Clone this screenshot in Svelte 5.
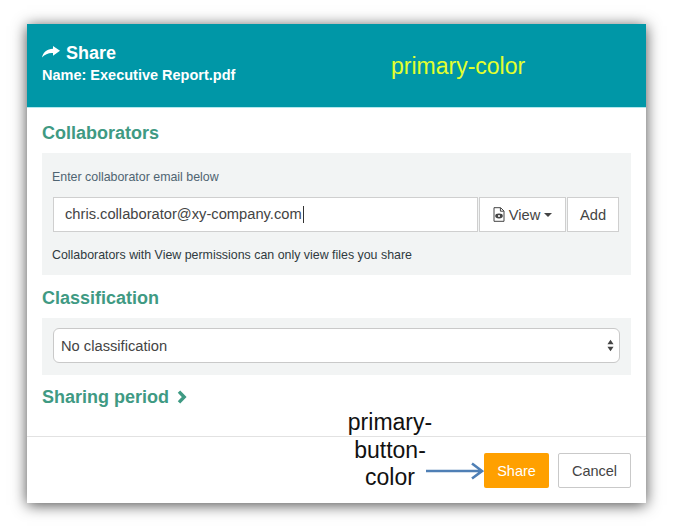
<script>
  let email = 'chris.collaborator@xy-company.com';
</script>

<div class="page">
  <div class="modal">
    <header class="modal-header">
      <h1 class="title">
        <svg class="share-icon" viewBox="0 0 18 12" width="18" height="12" aria-hidden="true">
          <path d="M11 0 L18 4.8 L11 9.8 V7 C7 6.6 3 8 0 11.6 C1 6.4 5 3.2 11 2.8 Z" fill="currentColor" />
        </svg>
        Share
      </h1>
      <div class="file-name">Name: Executive Report.pdf</div>
      <span class="note-primary">primary-color</span>
    </header>

    <div class="modal-body">
      <h2 class="section-title">Collaborators</h2>
      <div class="panel collab">
        <div class="hint">Enter collaborator email below</div>
        <div class="input-row">
          <div class="email-input">{email}<span class="caret"></span></div>
          <button class="btn view" type="button">
            <svg viewBox="0 0 12 15" width="12" height="15" aria-hidden="true">
              <path d="M1 0.7 H7.6 L11 4 V14.3 H1 Z M7.4 0.9 V4.2 H10.8" fill="none" stroke="#444" stroke-width="1" />
              <ellipse cx="6" cy="9" rx="3.8" ry="2.4" fill="#444" />
              <circle cx="6" cy="9" r="1.1" fill="#fff" />
            </svg>
            View
            <span class="caret-down"></span>
          </button>
          <button class="btn add" type="button">Add</button>
        </div>
        <div class="perm-note">Collaborators with View permissions can only view files you share</div>
      </div>

      <h2 class="section-title second">Classification</h2>
      <div class="panel classify">
        <div class="select">
          <span>No classification</span>
          <svg viewBox="0 0 8 14" width="7" height="13" aria-hidden="true">
            <path d="M4 0.5 L7.5 5.6 H0.5 Z M4 13.5 L0.5 8.4 H7.5 Z" fill="#444" />
          </svg>
        </div>
      </div>

      <h2 class="section-title third">
        Sharing period
        <svg viewBox="0 0 10 14" width="10" height="14" aria-hidden="true">
          <path d="M2 1.6 L7.2 7 L2 12.4" fill="none" stroke="currentColor" stroke-width="3.4" />
        </svg>
      </h2>
    </div>

    <footer class="modal-footer">
      <button class="btn-share" type="button">Share</button>
      <button class="btn-cancel" type="button">Cancel</button>
      <div class="note-button">
        <span>primary-</span>
        <span>button-</span>
        <span>color</span>
      </div>
      <svg class="note-arrow" viewBox="0 0 58 18" width="58" height="18" aria-hidden="true">
        <path d="M0 9 H55 M46 1.5 L56 9 L46 16.5" fill="none" stroke="#4f7fb5" stroke-width="2.6" />
      </svg>
    </footer>
  </div>
</div>

<style>
  :global(body) {
    margin: 0;
    background: #fff;
  }

  .page {
    width: 673px;
    height: 530px;
    padding: 24px 27px 27px;
    box-sizing: border-box;
    font-family: "Liberation Sans", Arial, sans-serif;
    overflow: hidden;
  }

  .modal {
    width: 619px;
    height: 479px;
    background: #fff;
    box-shadow: 0 2px 14px rgba(0, 0, 0, 0.7);
    display: flex;
    flex-direction: column;
  }

  .modal-header {
    position: relative;
    height: 84px;
    box-sizing: border-box;
    padding: 19px 15px 0;
    background: #0097a7;
    border-bottom: 1px solid #b2e8ee;
    color: #fff;
  }

  .title {
    margin: 0;
    display: flex;
    align-items: center;
    gap: 6px;
    font-size: 18px;
    line-height: 20px;
    font-weight: 700;
  }

  .share-icon {
    flex: none;
    margin-top: -3px;
  }

  .file-name {
    margin-top: 4px;
    font-size: 14.5px;
    line-height: 16px;
    font-weight: 700;
  }

  .note-primary {
    position: absolute;
    left: 364px;
    top: 29px;
    font-size: 23px;
    line-height: 26px;
    color: #e4ff2e;
  }

  .modal-body {
    flex: 1;
    padding: 0 15px;
  }

  .section-title {
    margin: 15px 0 10px;
    font-size: 18px;
    line-height: 20px;
    font-weight: 700;
    color: #3f9a83;
  }

  .section-title.second {
    margin: 13px 0 10px;
  }

  .section-title.third {
    margin: 12px 0 0;
    display: flex;
    align-items: center;
    gap: 8px;
  }

  .panel {
    background: #f2f4f4;
    padding: 0 11px;
  }

  .collab {
    height: 122px;
    box-sizing: border-box;
    padding: 17px 12px 0 11px;
  }

  .hint {
    margin-left: -1px;
    font-size: 12.4px;
    line-height: 14px;
    color: #4f6472;
  }

  .input-row {
    display: flex;
    margin-top: 13px;
    height: 35px;
  }

  .email-input {
    flex: 1;
    box-sizing: border-box;
    padding-left: 11px;
    background: #fff;
    border: 1px solid #cfcfcf;
    font-size: 14.7px;
    line-height: 33px;
    color: #444;
    white-space: nowrap;
  }

  .caret {
    display: inline-block;
    width: 1px;
    height: 17px;
    margin-left: 1px;
    vertical-align: -4px;
    background: #333;
  }

  .btn {
    box-sizing: border-box;
    height: 35px;
    background: #fff;
    border: 1px solid #cfcfcf;
    font-family: inherit;
    font-size: 14.7px;
    color: #444;
    padding: 0;
    margin-left: 1px;
  }

  .view {
    width: 87px;
    display: flex;
    align-items: center;
    justify-content: center;
    gap: 4px;
  }

  .add {
    width: 52px;
  }

  .caret-down {
    width: 0;
    height: 0;
    border-left: 4px solid transparent;
    border-right: 4px solid transparent;
    border-top: 4px solid #444;
  }

  .perm-note {
    margin: 16px 0 0 -1px;
    font-size: 12.4px;
    line-height: 14px;
    color: #2f3a40;
  }

  .classify {
    height: 57px;
    box-sizing: border-box;
    padding-top: 10px;
  }

  .select {
    height: 35px;
    box-sizing: border-box;
    padding: 0 5px 0 7px;
    display: flex;
    align-items: center;
    justify-content: space-between;
    background: #fff;
    border: 1px solid #c9c9c9;
    border-radius: 6px;
    font-size: 14.7px;
    color: #444;
  }

  .modal-footer {
    position: relative;
    height: 67px;
    box-sizing: border-box;
    border-top: 1px solid #e2e2e2;
    padding: 16px 15px 0 0;
    display: flex;
    justify-content: flex-end;
    gap: 9px;
  }

  .btn-share,
  .btn-cancel {
    height: 35px;
    box-sizing: border-box;
    border-radius: 2px;
    font-family: inherit;
    font-size: 14.5px;
    padding: 0;
  }

  .btn-share {
    width: 65px;
    background: #ffa000;
    border: 0;
    color: #fff;
  }

  .btn-cancel {
    width: 73px;
    background: #fff;
    border: 1px solid #c9c9c9;
    color: #444;
  }

  .note-button {
    position: absolute;
    left: 303px;
    top: -28px;
    width: 120px;
    display: flex;
    flex-direction: column;
    align-items: center;
    font-size: 23px;
    line-height: 27.5px;
    color: #111;
  }

  .note-arrow {
    position: absolute;
    left: 399px;
    top: 25px;
  }
</style>
